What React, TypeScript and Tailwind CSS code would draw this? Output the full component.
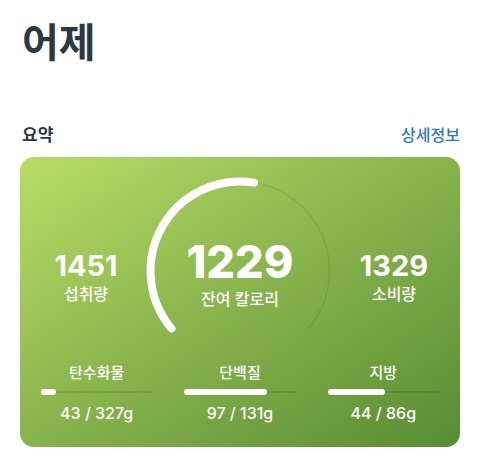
import React from 'react';

const FONT = { fontFamily: 'Inter, "Noto Sans CJK KR", sans-serif' };

const macros = [
  { label: '탄수화물', value: 43, goal: 327 },
  { label: '단백질', value: 97, goal: 131 },
  { label: '지방', value: 44, goal: 86 },
];

function Gauge() {
  // arc center (100,100), r 89.5, spans -130deg .. 130deg
  return (
    <svg width="200" height="166" viewBox="0 0 200 166" fill="none">
      <path
        d="M 31.44 157.53 A 89.5 89.5 0 1 1 168.56 157.53"
        stroke="rgba(0,0,0,0.08)"
        strokeWidth="1.6"
        strokeLinecap="round"
      />
      <path
        d="M 31.44 157.53 A 89.5 89.5 0 0 1 114 11.6"
        stroke="#ffffff"
        strokeWidth="8"
        strokeLinecap="round"
      />
    </svg>
  );
}

function Stat({ value, label }: { value: string; label: string }) {
  return (
    <div className="flex flex-col items-center pt-[80px] text-white">
      <div className="text-[29px] font-bold leading-none">{value}</div>
      <div className="mt-1 text-[16px] font-medium leading-5">{label}</div>
    </div>
  );
}

export default function App() {
  return (
    <div className="w-[480px] h-[472px] bg-white px-5 overflow-hidden" style={FONT}>
      <h1 className="pt-[23px] pl-[2px] text-[40px] font-bold leading-none text-[#2d3844]">어제</h1>

      <div className="mt-[60px] flex items-center justify-between">
        <h2 className="pl-[2px] text-[17px] font-bold leading-6 text-[#2d3844]">요약</h2>
        <button className="text-[16px] font-medium leading-6 text-[#2e7ab6]">상세정보</button>
      </div>

      <div className="mt-[10px] rounded-[14px] bg-linear-to-br from-[#b9dc66] to-[#578c33] pb-6">
        <div className="grid grid-cols-[1fr_200px_1fr] px-3 pt-[14px]">
          <Stat value="1451" label="섭취량" />
          <div className="relative">
            <Gauge />
            <div className="absolute inset-x-0 top-[68px] flex flex-col items-center text-white">
              <div className="text-[45px] font-extrabold leading-none">1229</div>
              <div className="mt-[5px] text-[16px] font-medium leading-5">잔여 칼로리</div>
            </div>
          </div>
          <Stat value="1329" label="소비량" />
        </div>

        <div className="mt-[26px] grid grid-cols-3 gap-8 px-[21px]">
          {macros.map((m) => (
            <div key={m.label} className="flex flex-col items-center text-white">
              <div className="text-[15px] font-medium leading-5">{m.label}</div>
              <div className="relative mt-[6px] h-[6px] w-full">
                <div className="absolute inset-x-0 top-[2px] h-[2px] rounded-full bg-black/10" />
                <div
                  className="absolute left-0 top-0 h-[6px] rounded-full bg-white"
                  style={{ width: `${Math.min(100, (m.value / m.goal) * 100)}%` }}
                />
              </div>
              <div className="mt-2 text-[16px] font-medium leading-5">
                {m.value} / {m.goal}g
              </div>
            </div>
          ))}
        </div>
      </div>
    </div>
  );
}
